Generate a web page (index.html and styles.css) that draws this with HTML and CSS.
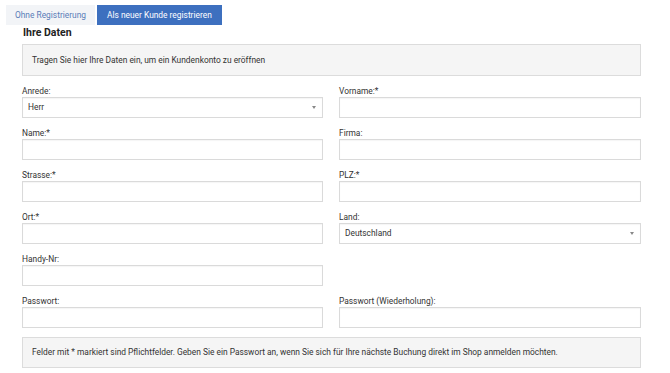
FILE: index.html
```html
<!DOCTYPE html>
<html lang="de">
<head>
<meta charset="utf-8">
<title>Registrierung</title>
<link rel="stylesheet" href="styles.css">
</head>
<body>
<div class="tabs">
  <div class="tab">Ohne Registrierung</div>
  <div class="tab active">Als neuer Kunde registrieren</div>
</div>
<div class="content">
  <h2 class="title">Ihre Daten</h2>
  <div class="note">Tragen Sie hier Ihre Daten ein, um ein Kundenkonto zu eröffnen</div>
  <div class="form">
    <div class="field"><label>Anrede:</label><div class="input select">Herr<span class="caret"></span></div></div>
    <div class="field"><label>Vorname:*</label><div class="input"></div></div>
    <div class="field"><label>Name:*</label><div class="input"></div></div>
    <div class="field"><label>Firma:</label><div class="input"></div></div>
    <div class="field"><label>Strasse:*</label><div class="input"></div></div>
    <div class="field"><label>PLZ:*</label><div class="input"></div></div>
    <div class="field"><label>Ort:*</label><div class="input"></div></div>
    <div class="field"><label>Land:</label><div class="input select">Deutschland<span class="caret"></span></div></div>
    <div class="field"><label>Handy-Nr:</label><div class="input"></div></div>
    <div class="field"></div>
    <div class="field"><label>Passwort:</label><div class="input"></div></div>
    <div class="field"><label>Passwort (Wiederholung):</label><div class="input"></div></div>
  </div>
  <div class="note note-bottom">Felder mit * markiert sind Pflichtfelder. Geben Sie ein Passwort an, wenn Sie sich für Ihre nächste Buchung direkt im Shop anmelden möchten.</div>
</div>
</body>
</html>
```
FILE: styles.css
```css
* { box-sizing: border-box; }
html, body { margin: 0; padding: 0; background: #fff; }
body {
  font-family: Roboto, "Liberation Sans", sans-serif;
  font-size: 8.4px;
  color: #333;
  width: 670px;
  height: 373px;
  overflow: hidden;
}
.tabs {
  display: flex;
  padding: 5px 0 0 6px;
  gap: 2px;
}
.tab {
  height: 20px;
  line-height: 20px;
  padding: 0 9px;
  background: #f2f4f7;
  color: #5a7db8;
  font-size: 8.4px;
}
.tab.active {
  background: #3d70bf;
  color: #fff;
  padding: 0 10px;
}
.content {
  padding: 0 29px 0 22px;
}
.title {
  margin: 0;
  padding-left: 1px;
  height: 19px;
  line-height: 16px;
  font-size: 10.5px;
  font-weight: 700;
  color: #222;
}
.note {
  height: 32px;
  line-height: 30px;
  padding: 0 9px;
  background: #f5f5f5;
  border: 1px solid #dcdcdc;
  color: #333;
}
.note-bottom {
  height: 31px;
  line-height: 29px;
  margin-top: 9px;
}
.form {
  display: grid;
  grid-template-columns: 301px 302px;
  column-gap: 16px;
  row-gap: 10px;
  margin-top: 10px;
}
.field {
  display: flex;
  flex-direction: column;
  min-height: 32px;
}
.field label {
  height: 11px;
  line-height: 10px;
  color: #333;
}
.input {
  position: relative;
  height: 21px;
  line-height: 19px;
  padding: 0 5px;
  border: 1px solid #dadada;
  background: #fff;
  box-shadow: inset 0 1px 1px rgba(0,0,0,0.04);
  color: #333;
}
.caret {
  position: absolute;
  right: 6px;
  top: 8px;
  width: 0;
  height: 0;
  border-left: 2.5px solid transparent;
  border-right: 2.5px solid transparent;
  border-top: 3px solid #888;
}
```
